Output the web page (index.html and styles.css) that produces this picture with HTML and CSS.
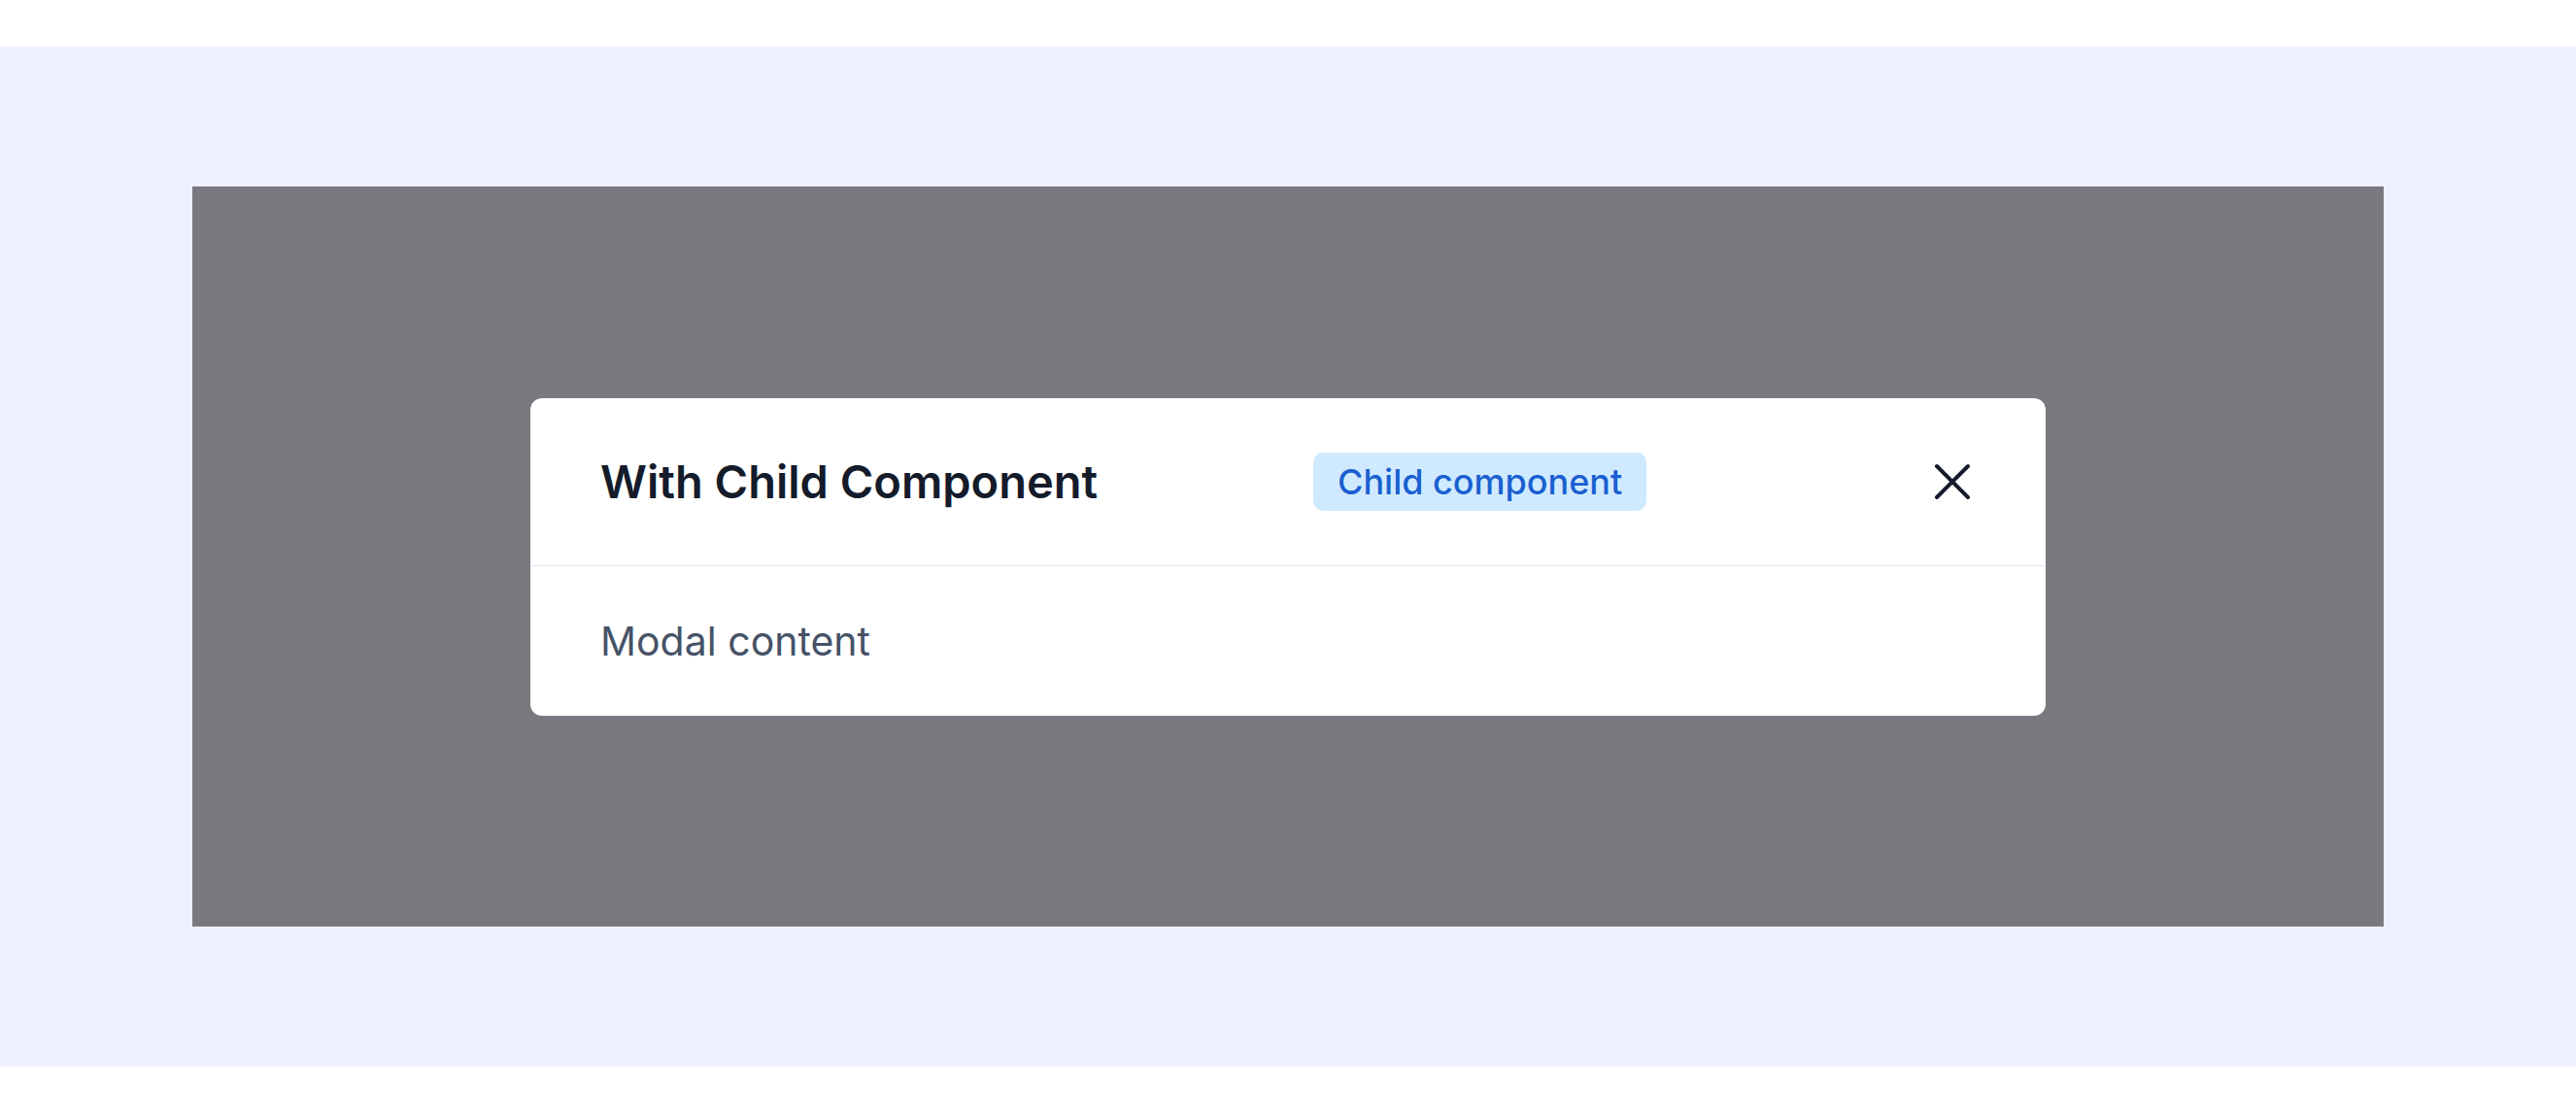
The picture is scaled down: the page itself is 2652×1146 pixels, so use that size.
FILE: index.html
```html
<!DOCTYPE html>
<html lang="en">
<head>
  <meta charset="UTF-8" />
  <meta name="viewport" content="width=device-width, initial-scale=1.0"/>
  <title>Modal - With Child Component</title>
  <link rel="stylesheet" href="styles.css">
</head>
<body>
  <div class="stage">
    <div class="backdrop">
      <div class="modal" role="dialog" aria-labelledby="modal-title">
        <div class="modal-header">
          <h2 class="modal-title" id="modal-title">With Child Component</h2>
          <span class="badge">Child component</span>
          <button type="button" class="close-btn" aria-label="Close">
            <svg width="48" height="48" viewBox="0 0 48 48" fill="none" stroke="#141b2b" stroke-width="4" stroke-linecap="round">
              <path d="M8 8L40 40M40 8L8 40"/>
            </svg>
          </button>
        </div>
        <div class="modal-body">Modal content</div>
      </div>
    </div>
  </div>
</body>
</html>
```

FILE: styles.css
```css
body {
  margin: 0;
  padding: 48px 0;
  background: #fff;
  font-family: Inter, "Noto Sans", sans-serif;
}
.stage {
  background: #edf0fe;
  padding: 144px 198px;
}
.backdrop {
  background: #79787f;
  height: 762px;
  display: flex;
  align-items: center;
  justify-content: center;
}
.modal {
  width: 1560px;
  background: #fff;
  border-radius: 12px;
}
.modal-header {
  display: flex;
  align-items: center;
  padding: 56px 72px;
  border-bottom: 1px solid #e3e6f8;
}
.modal-title {
  margin: 0;
  width: 734px;
  font-size: 47px;
  line-height: 56px;
  font-weight: 600;
  color: #141b2b;
}
.badge {
  display: inline-flex;
  align-items: center;
  height: 60px;
  padding: 0 25px;
  border-radius: 10px;
  background: #cfeafe;
  color: #1a5fd1;
  font-size: 36px;
  font-weight: 500;
}
.close-btn {
  margin-left: auto;
  width: 48px;
  height: 48px;
  padding: 0;
  border: none;
  background: none;
  cursor: pointer;
}
.close-btn svg {
  display: block;
  width: 48px;
  height: 48px;
}
.modal-body {
  padding: 48px 72px;
  font-size: 41px;
  line-height: 58px;
  color: #465267;
}
```
